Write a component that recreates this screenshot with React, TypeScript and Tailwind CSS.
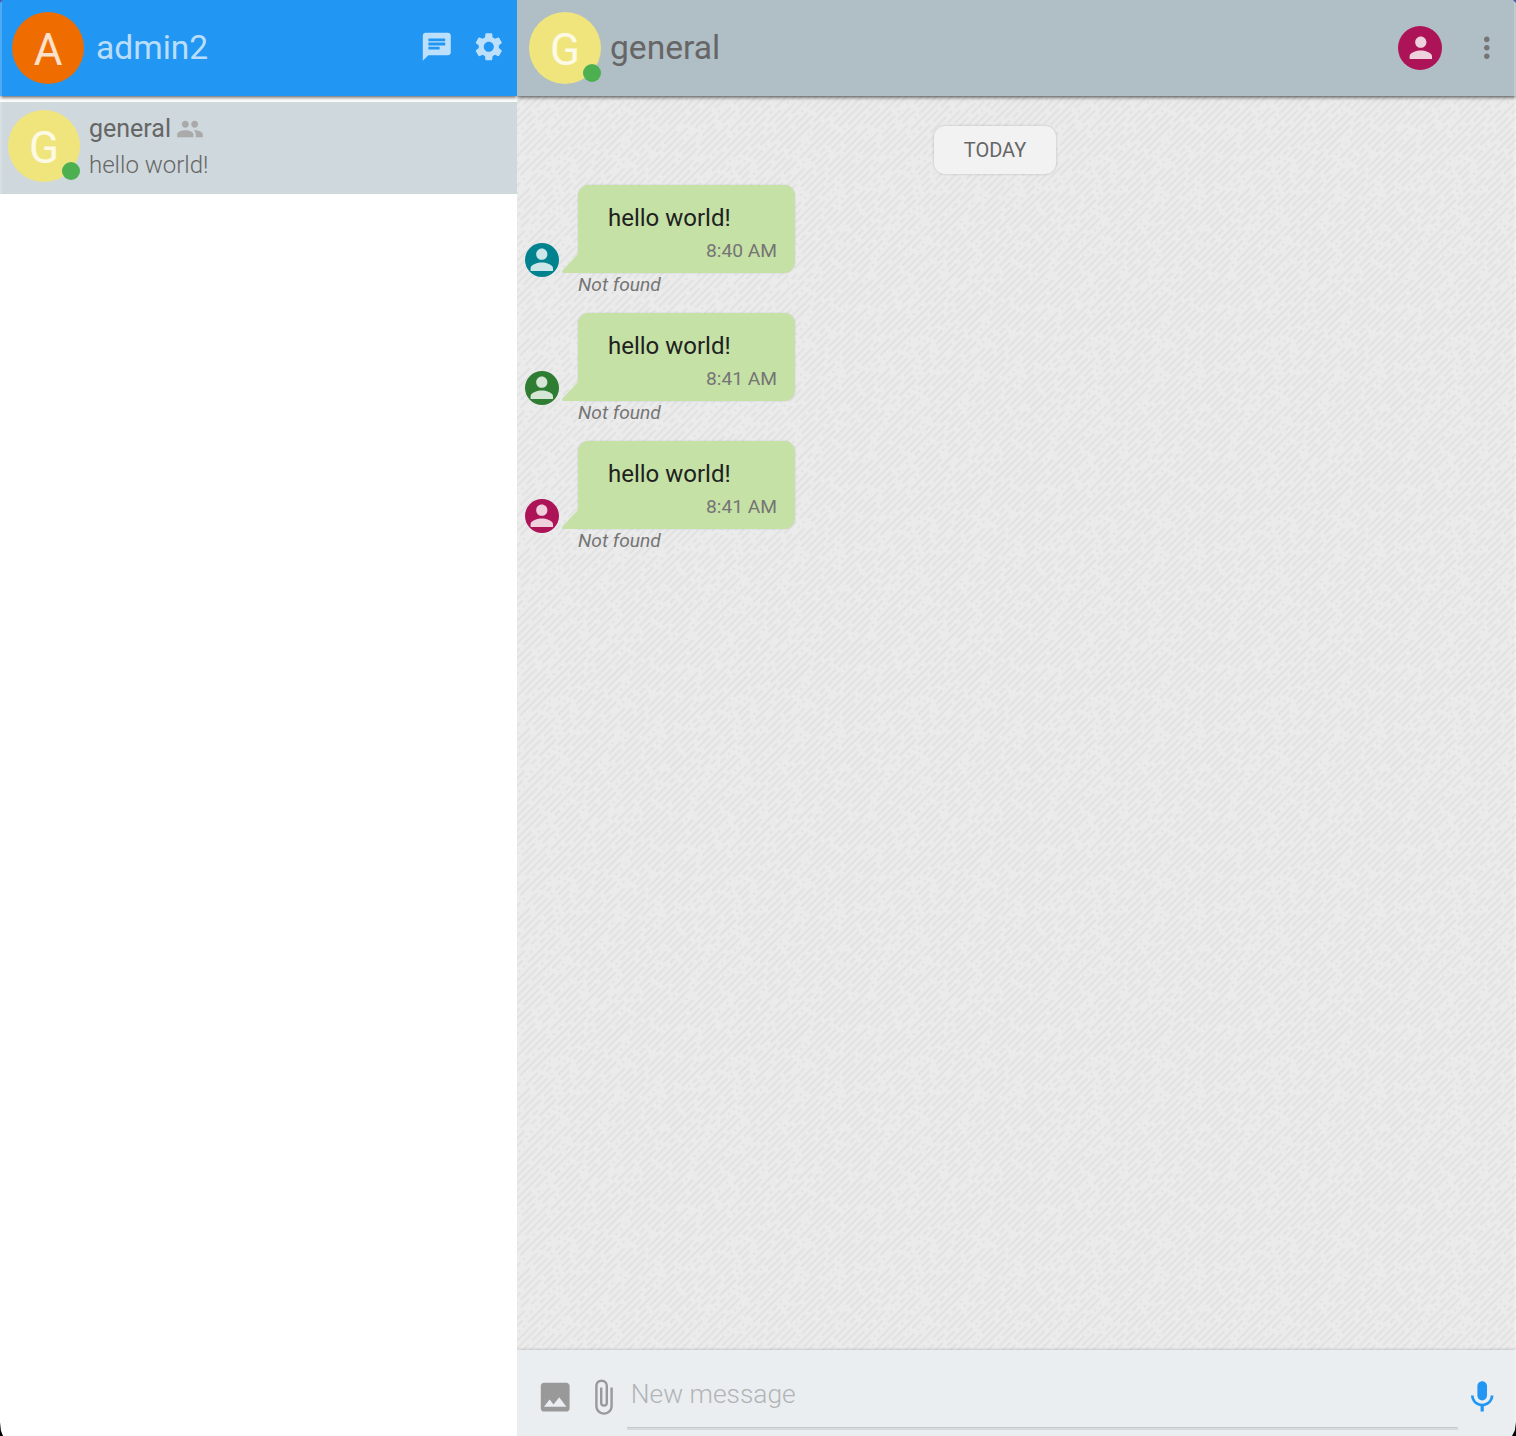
import React from "react";
import { MdChat, MdSettings, MdPeople, MdPerson, MdMoreVert, MdPhoto, MdAttachFile, MdMic } from "react-icons/md";

const TILE = 180;
const LINES = 24;
const PITCH = TILE / LINES;

/** Broken diagonal dashes that wrap seamlessly around a square tile. */
function buildDashes(): string {
  let seed = 41;
  const rnd = () => {
    seed = (seed * 16807) % 2147483647;
    return seed / 2147483647;
  };
  let d = "";
  for (let k = 0; k < LINES; k++) {
    const c = k * PITCH;
    const start = Math.floor(rnd() * 24) * 3.75;
    let t = 0;
    while (t < TILE - 4) {
      const roll = rnd();
      let len = roll < 0.22 ? 0.4 : roll < 0.6 ? 3.75 * (1 + Math.floor(rnd() * 3)) : 3.75 * (3 + Math.floor(rnd() * 7));
      len = Math.min(len, Math.max(0.4, TILE - 4.5 - t));
      const x = (start + t) % TILE;
      const y = (((c - x) % TILE) + TILE) % TILE;
      for (const [ox, oy] of [[0, 0], [-TILE, 0], [0, TILE], [-TILE, TILE]]) {
        d += `M${(x + ox).toFixed(1)} ${(y + oy).toFixed(1)}l${len.toFixed(1)} ${(-len).toFixed(1)}`;
      }
      t += len + 4.4 + (rnd() < 0.14 ? 3.75 : 0);
    }
  }
  return d;
}
const DASHES = buildDashes();

function Texture() {
  return (
    <svg className="absolute inset-0 h-full w-full" aria-hidden="true">
      <defs>
        <pattern id="weave" width={TILE} height={TILE} patternUnits="userSpaceOnUse">
          <path d={DASHES} stroke="#e2e2e2" strokeWidth="2.2" strokeLinecap="round" fill="none" />
        </pattern>
      </defs>
      <rect width="100%" height="100%" fill="url(#weave)" />
    </svg>
  );
}

function Avatar({ letter, color, online }: { letter: string; color: string; online?: boolean }) {
  return (
    <div className={`relative flex size-[72px] shrink-0 items-center justify-center rounded-full text-[44px] leading-none text-white/80 ${color}`}>
      <span className="pt-[3px]">{letter}</span>
      {online && <span className="absolute right-0 bottom-[2px] size-[18px] rounded-full bg-[#4caf50]" />}
    </div>
  );
}

function Message({ time, color }: { time: string; color: string }) {
  return (
    <div className="flex h-32 pl-2">
      <div className={`mt-[58px] flex size-[34px] shrink-0 items-center justify-center rounded-full text-white/80 ${color}`}>
        <MdPerson size={33.6} className="shrink-0" />
      </div>
      <div className="ml-[19px]">
        <div className="relative h-[88px] w-[217px] rounded-[11px] rounded-bl-none bg-[#c5e1a5] pt-[17px] pr-[18px] pl-[30px] shadow-[0_0_2px_rgba(0,0,0,0.14)]">
          <svg className="absolute bottom-0 -left-[17px]" width="18" height="20" viewBox="0 0 18 20">
            <path d="M18 0V20H2.500Q0 19.700 1.800 17L17 1Z" fill="#c5e1a5" />
          </svg>
          <div className="text-[24px] leading-8 text-[#212121]">hello world!</div>
          <div className="mt-[5px] text-right text-[19.200px] leading-6 text-[#757575]">{time}</div>
        </div>
        <div className="pt-px text-[19.200px] leading-[22px] text-[#757575] italic">Not found</div>
      </div>
    </div>
  );
}

export default function App() {
  return (
    <div className="relative flex h-[1436px] w-[1516px] overflow-hidden bg-white font-['Roboto',sans-serif]">
      <aside className="flex w-[517px] shrink-0 flex-col overflow-hidden bg-white">
        <header className="relative z-10 flex h-24 shrink-0 items-center bg-[#2196f3] px-3 shadow-[0_1px_4px_rgba(0,0,0,0.75)]">
          <Avatar letter="A" color="bg-[#ef6c00]" />
          <h1 className="ml-3 flex-1 text-[33.600px] text-white/70">admin2</h1>
          <div className="-mr-px flex gap-[19px] pb-[2px] text-white/70">
            <MdChat size={33.6} />
            <MdSettings size={33.6} />
          </div>
        </header>
        <div className="mt-[6px] flex h-[92px] bg-[#cfd8dc] pt-2 pl-2">
          <Avatar letter="G" color="bg-[#f0e57d]" online />
          <div className="ml-[9px] pt-[3px]">
            <div className="flex items-center gap-[5px] text-[25px] leading-8 text-[#666]">
              general <MdPeople size={28} className="text-[#aaa]" />
            </div>
            <div className="mt-1 text-[24px] leading-8 font-light text-[#666]">hello world!</div>
          </div>
        </div>
      </aside>
      <main className="flex min-w-0 flex-1 flex-col overflow-hidden">
        <header className="relative z-10 flex h-24 shrink-0 items-center bg-[#b0bec5] px-3 shadow-[0_1px_4px_rgba(0,0,0,0.75)]">
          <Avatar letter="G" color="bg-[#f0e57d]" online />
          <h2 className="ml-[9px] flex-1 text-[33.600px] text-[#666]">general</h2>
          <div className="flex size-11 items-center justify-center rounded-full bg-[#ad1457] text-white/80">
            <MdPerson size={33.6} />
          </div>
          <MdMoreVert size={33.6} className="-mt-px ml-7 text-[#757575]" />
        </header>
        <section className="relative flex-1 bg-[#ebebeb]">
          <Texture />
          <div className="relative flex flex-col pt-[30px]">
            <div className="flex justify-center pr-[43px] pb-[11px]">
              <div className="flex h-12 w-[122px] items-center justify-center rounded-[11px] bg-[#f2f2f2] text-[20px] text-[#666] shadow-[0_0_3px_rgba(0,0,0,0.2)]">
                TODAY
              </div>
            </div>
            <Message time="8:40 AM" color="bg-[#00838f]" />
            <Message time="8:41 AM" color="bg-[#2e7d32]" />
            <Message time="8:41 AM" color="bg-[#ad1457]" />
          </div>
        </section>
        <footer className="relative flex h-[86px] shrink-0 bg-[#eaeef1] pt-7 pl-[19px] shadow-[0_0_3px_rgba(0,0,0,0.25)]">
          <MdPhoto size={38.4} className="text-[#999]" />
          <MdAttachFile size={38.4} className="ml-[10px] text-[#999]" />
          <div className="ml-[4px] h-[52px] w-[831px] border-b-2 border-[#d5dadd] pl-1 text-[26.400px] leading-8 font-light text-[#b2b4b6] shadow-[inset_0_-1px_0_#c5c9cc]">
            New message
          </div>
          <MdMic size={38.4} className="ml-[5px] text-[#2196f3]" />
        </footer>
      </main>
      <span className="absolute top-0 left-0 z-20 h-full w-[2px] bg-white/20" />
      <span className="absolute top-0 right-0 z-20 h-full w-[2px] bg-white/20" />
      <span className="absolute top-0 left-0 z-20 size-[3px] bg-[#4a5bb0] [clip-path:polygon(0_0,100%_0,0_100%)]" />
      <span className="absolute top-0 right-0 z-20 size-[3px] bg-[#4a5bb0] [clip-path:polygon(0_0,100%_0,100%_100%)]" />
      <span className="absolute bottom-0 left-0 z-20 h-[14px] w-[3px] bg-black [clip-path:polygon(0_0,30%_60%,100%_100%,0_100%)]" />
      <span className="absolute right-0 bottom-0 z-20 h-[14px] w-[4px] bg-black [clip-path:polygon(100%_0,70%_60%,0_100%,100%_100%)]" />
    </div>
  );
}
